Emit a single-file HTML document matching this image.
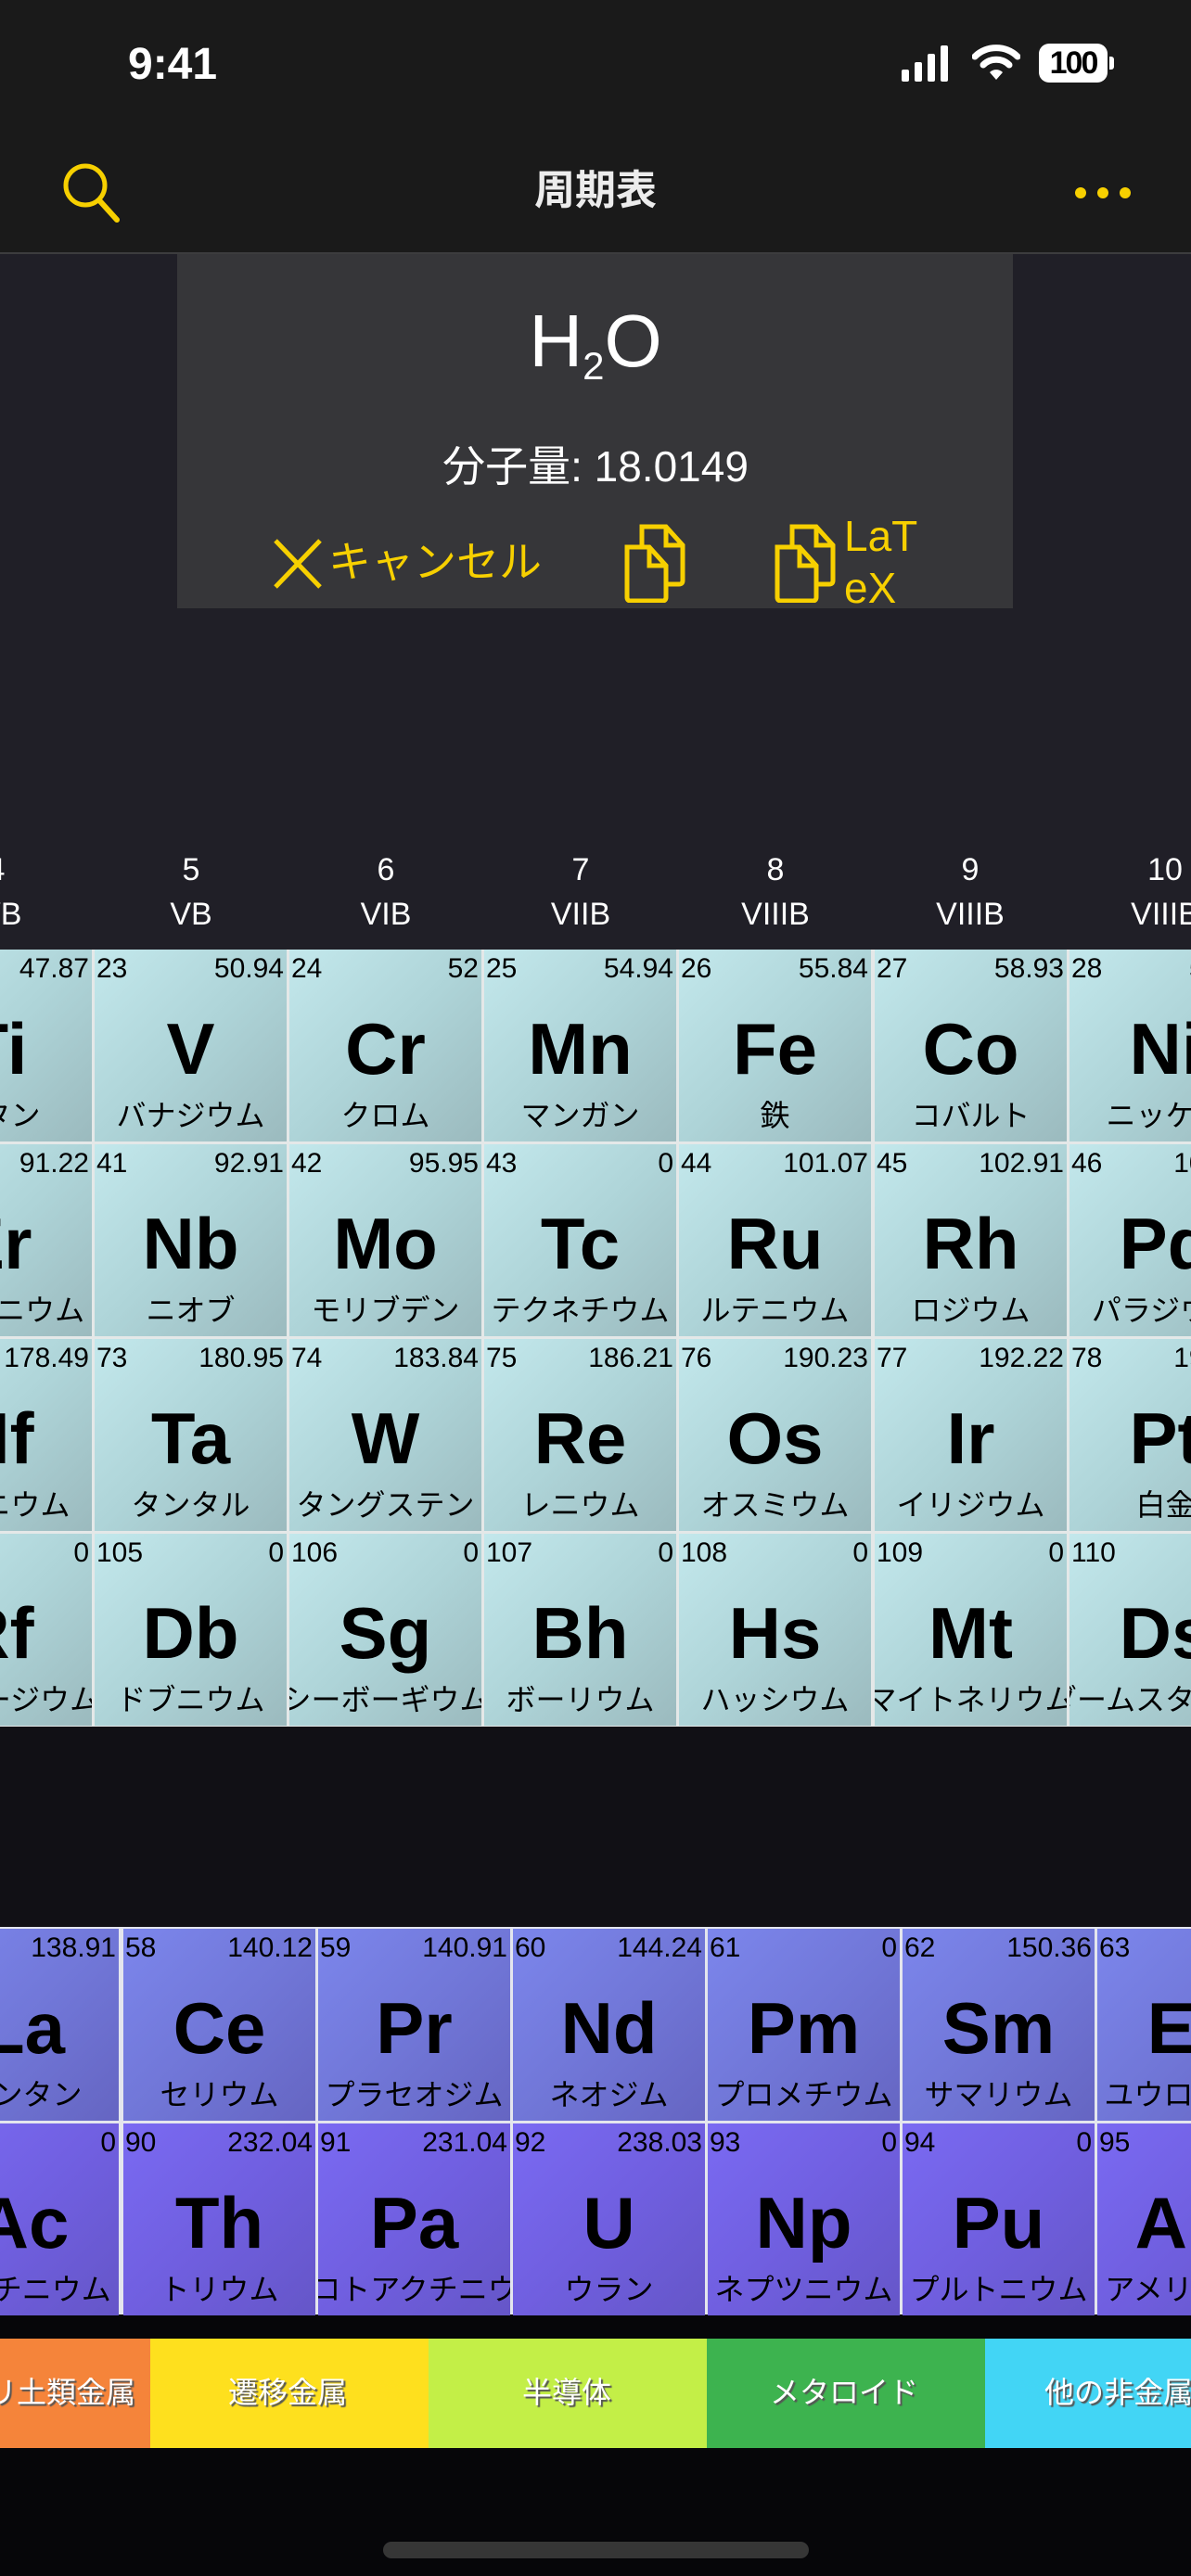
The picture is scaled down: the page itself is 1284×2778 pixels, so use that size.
<!DOCTYPE html>
<html><head><meta charset="utf-8">
<style>
*{margin:0;padding:0;box-sizing:border-box}
html,body{width:1284px;height:2778px;overflow:hidden}
body{background:#050507;position:relative;font-family:"Liberation Sans","Noto Sans CJK JP",sans-serif}
#w{position:absolute;left:0;top:0;width:1284px;height:2778px;overflow:hidden}
.a{position:absolute}
.c{position:absolute;width:207px;height:207px;overflow:hidden;color:#000}
.t{background:linear-gradient(135deg,#c3e8ec 0%,#aed4d8 50%,#9bbabe 100%)}
.l{background:linear-gradient(135deg,#7c86ec 0%,#7177d8 50%,#6565c2 100%)}
.x{background:linear-gradient(135deg,#7a6af2 0%,#705fe0 50%,#6556c8 100%)}
.n{position:absolute;left:2px;top:4px;font-size:30px;line-height:34px}
.w{position:absolute;right:3px;top:4px;font-size:30px;line-height:34px}
.s{position:absolute;left:0;right:0;top:62px;text-align:center;font-weight:bold;font-size:78px;line-height:90px}
.m{position:absolute;left:50%;top:159px;transform:translateX(-50%);white-space:nowrap;font-size:32px;line-height:40px}
.g{position:absolute;width:210px;text-align:center;color:#fff;font-size:34px;line-height:40px}
.lg{position:absolute;top:2522px;height:118px}
.lt{position:absolute;top:2560px;color:#fff;font-size:32px;line-height:40px;white-space:nowrap;text-shadow:2px 2px 1px #555}
</style></head><body><div id="w">
<div class="a" style="left:0;top:0;width:1284px;height:272px;background:#1a1a1a"></div>
<div class="a" style="left:0;top:272px;width:1284px;height:2px;background:#3c3c3e"></div>
<div class="a" style="left:0;top:274px;width:1284px;height:750px;background:#201f27"></div>
<div class="a" style="left:0;top:1024px;width:1284px;height:840px;background:#e4e8e8"></div>
<div class="a" style="left:0;top:1862px;width:1284px;height:216px;background:#111015"></div>
<div class="a" style="left:0;top:2078px;width:1284px;height:420px;background:#e4e6ee"></div>
<div class="a" style="left:0;top:2496px;width:1284px;height:282px;background:#060609"></div>

<div class="a" style="left:138px;top:42px;color:#fff;font-size:48px;font-weight:bold;line-height:56px">9:41</div>
<svg class="a" style="left:970px;top:48px" width="60" height="40" viewBox="0 0 60 40">
<rect x="2" y="27" width="8" height="13" rx="2" fill="#fff"/><rect x="16" y="19" width="8" height="21" rx="2" fill="#fff"/><rect x="30" y="10" width="8" height="30" rx="2" fill="#fff"/><rect x="44" y="1" width="8" height="39" rx="2" fill="#fff"/></svg>
<svg class="a" style="left:1048px;top:48px" width="52" height="40" viewBox="0 0 52 40">
<path d="M3 13 A33 33 0 0 1 49 13" stroke="#fff" stroke-width="7" fill="none" stroke-linecap="round"/>
<path d="M12 22 A20 20 0 0 1 40 22" stroke="#fff" stroke-width="7" fill="none" stroke-linecap="round"/>
<path d="M19 30 L26 38 L33 30 A10 10 0 0 0 19 30Z" fill="#fff"/></svg>
<div class="a" style="left:1120px;top:47px;width:74px;height:42px;background:#fff;border-radius:11px;color:#000;font-weight:bold;font-size:34px;line-height:42px;text-align:center;letter-spacing:-2px">100</div>
<div class="a" style="left:1196px;top:61px;width:5px;height:14px;background:#fff;border-radius:0 3px 3px 0"></div>

<svg class="a" style="left:64px;top:172px" width="70" height="70" viewBox="0 0 70 70">
<circle cx="28" cy="28" r="21" stroke="#f7d000" stroke-width="5" fill="none"/><path d="M43 44 L62 65" stroke="#f7d000" stroke-width="6" stroke-linecap="round"/></svg>
<div class="a" style="left:442px;top:180px;width:400px;text-align:center;color:#ececec;font-size:44px;font-weight:bold;line-height:52px">周期表</div>
<svg class="a" style="left:1156px;top:196px" width="66" height="24"><circle cx="9" cy="12" r="6" fill="#f7d000"/><circle cx="33" cy="12" r="6" fill="#f7d000"/><circle cx="57" cy="12" r="6" fill="#f7d000"/></svg>

<div class="a" style="left:191px;top:274px;width:901px;height:382px;background:#363639"></div>
<div class="a" style="left:442px;top:318px;width:400px;text-align:center;color:#fff;font-size:80px;line-height:100px">H<span style="font-size:42px;position:relative;top:14px">2</span>O</div>
<div class="a" style="left:342px;top:474px;width:600px;text-align:center;color:#fff;font-size:46px;line-height:58px">分子量: 18.0149</div>
<svg class="a" style="left:294px;top:580px" width="54" height="56" viewBox="0 0 54 56"><path d="M3 3 L51 53 M51 3 L3 53" stroke="#f7d000" stroke-width="5"/></svg>
<div class="a" style="left:354px;top:576px;color:#f7d000;font-size:46px;line-height:60px">キャンセル</div>
<svg class="a" style="left:672px;top:564px" width="70" height="86" viewBox="0 0 70 86">
<path d="M20 4 H46 L64 24 V62 Q64 66 60 66 H24 Q20 66 20 62 Z" stroke="#f7d000" stroke-width="5" fill="none"/>
<path d="M46 4 V24 H64" stroke="#f7d000" stroke-width="5" fill="none"/>
<path d="M4 26 H28 L46 46 V80 Q46 84 42 84 H8 Q4 84 4 80 Z" stroke="#f7d000" stroke-width="5" fill="#363639"/>
<path d="M28 26 V46 H46" stroke="#f7d000" stroke-width="5" fill="none"/></svg>
<svg class="a" style="left:834px;top:564px" width="70" height="86" viewBox="0 0 70 86">
<path d="M20 4 H46 L64 24 V62 Q64 66 60 66 H24 Q20 66 20 62 Z" stroke="#f7d000" stroke-width="5" fill="none"/>
<path d="M46 4 V24 H64" stroke="#f7d000" stroke-width="5" fill="none"/>
<path d="M4 26 H28 L46 46 V80 Q46 84 42 84 H8 Q4 84 4 80 Z" stroke="#f7d000" stroke-width="5" fill="#363639"/>
<path d="M28 26 V46 H46" stroke="#f7d000" stroke-width="5" fill="none"/></svg>
<div class="a" style="left:910px;top:550px;color:#f7d000;font-size:46px;line-height:56px">LaT<br>eX</div>

<div class="g" style="left:-109px;top:918px">4</div><div class="g" style="left:-109px;top:966px">IVB</div>
<div class="g" style="left:101px;top:918px">5</div><div class="g" style="left:101px;top:966px">VB</div>
<div class="g" style="left:311px;top:918px">6</div><div class="g" style="left:311px;top:966px">VIB</div>
<div class="g" style="left:521px;top:918px">7</div><div class="g" style="left:521px;top:966px">VIIB</div>
<div class="g" style="left:731px;top:918px">8</div><div class="g" style="left:731px;top:966px">VIIIB</div>
<div class="g" style="left:941px;top:918px">9</div><div class="g" style="left:941px;top:966px">VIIIB</div>
<div class="g" style="left:1151px;top:918px">10</div><div class="g" style="left:1151px;top:966px">VIIIB</div>

<div class="c t" style="left:-108px;top:1024px"><span class="n">22</span><span class="w">47.87</span><span class="s">Ti</span><span class="m">チタン</span></div>
<div class="c t" style="left:102px;top:1024px"><span class="n">23</span><span class="w">50.94</span><span class="s">V</span><span class="m">バナジウム</span></div>
<div class="c t" style="left:312px;top:1024px"><span class="n">24</span><span class="w">52</span><span class="s">Cr</span><span class="m">クロム</span></div>
<div class="c t" style="left:522px;top:1024px"><span class="n">25</span><span class="w">54.94</span><span class="s">Mn</span><span class="m">マンガン</span></div>
<div class="c t" style="left:732px;top:1024px"><span class="n">26</span><span class="w">55.84</span><span class="s">Fe</span><span class="m">鉄</span></div>
<div class="c t" style="left:943px;top:1024px"><span class="n">27</span><span class="w">58.93</span><span class="s">Co</span><span class="m">コバルト</span></div>
<div class="c t" style="left:1153px;top:1024px"><span class="n">28</span><span class="w">58.69</span><span class="s">Ni</span><span class="m">ニッケル</span></div>
<div class="c t" style="left:-108px;top:1234px"><span class="n">40</span><span class="w">91.22</span><span class="s">Zr</span><span class="m">ジルコニウム</span></div>
<div class="c t" style="left:102px;top:1234px"><span class="n">41</span><span class="w">92.91</span><span class="s">Nb</span><span class="m">ニオブ</span></div>
<div class="c t" style="left:312px;top:1234px"><span class="n">42</span><span class="w">95.95</span><span class="s">Mo</span><span class="m">モリブデン</span></div>
<div class="c t" style="left:522px;top:1234px"><span class="n">43</span><span class="w">0</span><span class="s">Tc</span><span class="m">テクネチウム</span></div>
<div class="c t" style="left:732px;top:1234px"><span class="n">44</span><span class="w">101.07</span><span class="s">Ru</span><span class="m">ルテニウム</span></div>
<div class="c t" style="left:943px;top:1234px"><span class="n">45</span><span class="w">102.91</span><span class="s">Rh</span><span class="m">ロジウム</span></div>
<div class="c t" style="left:1153px;top:1234px"><span class="n">46</span><span class="w">106.42</span><span class="s">Pd</span><span class="m">パラジウム</span></div>
<div class="c t" style="left:-108px;top:1444px"><span class="n">72</span><span class="w">178.49</span><span class="s">Hf</span><span class="m">ハフニウム</span></div>
<div class="c t" style="left:102px;top:1444px"><span class="n">73</span><span class="w">180.95</span><span class="s">Ta</span><span class="m">タンタル</span></div>
<div class="c t" style="left:312px;top:1444px"><span class="n">74</span><span class="w">183.84</span><span class="s">W</span><span class="m">タングステン</span></div>
<div class="c t" style="left:522px;top:1444px"><span class="n">75</span><span class="w">186.21</span><span class="s">Re</span><span class="m">レニウム</span></div>
<div class="c t" style="left:732px;top:1444px"><span class="n">76</span><span class="w">190.23</span><span class="s">Os</span><span class="m">オスミウム</span></div>
<div class="c t" style="left:943px;top:1444px"><span class="n">77</span><span class="w">192.22</span><span class="s">Ir</span><span class="m">イリジウム</span></div>
<div class="c t" style="left:1153px;top:1444px"><span class="n">78</span><span class="w">195.08</span><span class="s">Pt</span><span class="m">白金</span></div>
<div class="c t" style="left:-108px;top:1654px"><span class="n">104</span><span class="w">0</span><span class="s">Rf</span><span class="m">ラザホージウム</span></div>
<div class="c t" style="left:102px;top:1654px"><span class="n">105</span><span class="w">0</span><span class="s">Db</span><span class="m">ドブニウム</span></div>
<div class="c t" style="left:312px;top:1654px"><span class="n">106</span><span class="w">0</span><span class="s">Sg</span><span class="m">シーボーギウム</span></div>
<div class="c t" style="left:522px;top:1654px"><span class="n">107</span><span class="w">0</span><span class="s">Bh</span><span class="m">ボーリウム</span></div>
<div class="c t" style="left:732px;top:1654px"><span class="n">108</span><span class="w">0</span><span class="s">Hs</span><span class="m">ハッシウム</span></div>
<div class="c t" style="left:943px;top:1654px"><span class="n">109</span><span class="w">0</span><span class="s">Mt</span><span class="m">マイトネリウム</span></div>
<div class="c t" style="left:1153px;top:1654px"><span class="n">110</span><span class="w">0</span><span class="s">Ds</span><span class="m">ダームスタチウム</span></div>

<div class="c l" style="left:-79px;top:2080px"><span class="n">57</span><span class="w">138.91</span><span class="s">La</span><span class="m">ランタン</span></div>
<div class="c l" style="left:133px;top:2080px"><span class="n">58</span><span class="w">140.12</span><span class="s">Ce</span><span class="m">セリウム</span></div>
<div class="c l" style="left:343px;top:2080px"><span class="n">59</span><span class="w">140.91</span><span class="s">Pr</span><span class="m">プラセオジム</span></div>
<div class="c l" style="left:553px;top:2080px"><span class="n">60</span><span class="w">144.24</span><span class="s">Nd</span><span class="m">ネオジム</span></div>
<div class="c l" style="left:763px;top:2080px"><span class="n">61</span><span class="w">0</span><span class="s">Pm</span><span class="m">プロメチウム</span></div>
<div class="c l" style="left:973px;top:2080px"><span class="n">62</span><span class="w">150.36</span><span class="s">Sm</span><span class="m">サマリウム</span></div>
<div class="c l" style="left:1183px;top:2080px"><span class="n">63</span><span class="w">151.96</span><span class="s">Eu</span><span class="m">ユウロピウム</span></div>
<div class="c x" style="left:-79px;top:2290px"><span class="n">89</span><span class="w">0</span><span class="s">Ac</span><span class="m">アクチニウム</span></div>
<div class="c x" style="left:133px;top:2290px"><span class="n">90</span><span class="w">232.04</span><span class="s">Th</span><span class="m">トリウム</span></div>
<div class="c x" style="left:343px;top:2290px"><span class="n">91</span><span class="w">231.04</span><span class="s">Pa</span><span class="m">プロトアクチニウム</span></div>
<div class="c x" style="left:553px;top:2290px"><span class="n">92</span><span class="w">238.03</span><span class="s">U</span><span class="m">ウラン</span></div>
<div class="c x" style="left:763px;top:2290px"><span class="n">93</span><span class="w">0</span><span class="s">Np</span><span class="m">ネプツニウム</span></div>
<div class="c x" style="left:973px;top:2290px"><span class="n">94</span><span class="w">0</span><span class="s">Pu</span><span class="m">プルトニウム</span></div>
<div class="c x" style="left:1183px;top:2290px"><span class="n">95</span><span class="w">0</span><span class="s">Am</span><span class="m">アメリシウム</span></div>

<div class="lg" style="left:0;width:162px;background:#f5843a"></div>
<div class="lg" style="left:162px;width:300px;background:#fee01e"></div>
<div class="lg" style="left:462px;width:300px;background:#c3ef47"></div>
<div class="lg" style="left:762px;width:300px;background:#3db34f"></div>
<div class="lg" style="left:1062px;width:222px;background:#42d5f5"></div>
<div class="lt" style="right:1138px">アルカリ土類金属</div>
<div class="lt" style="left:246px">遷移金属</div>
<div class="lt" style="left:563px">半導体</div>
<div class="lt" style="left:830px">メタロイド</div>
<div class="lt" style="left:1126px">他の非金属</div>

<div class="a" style="left:413px;top:2741px;width:459px;height:18px;border-radius:9px;background:#363636"></div>
</div></body></html>
